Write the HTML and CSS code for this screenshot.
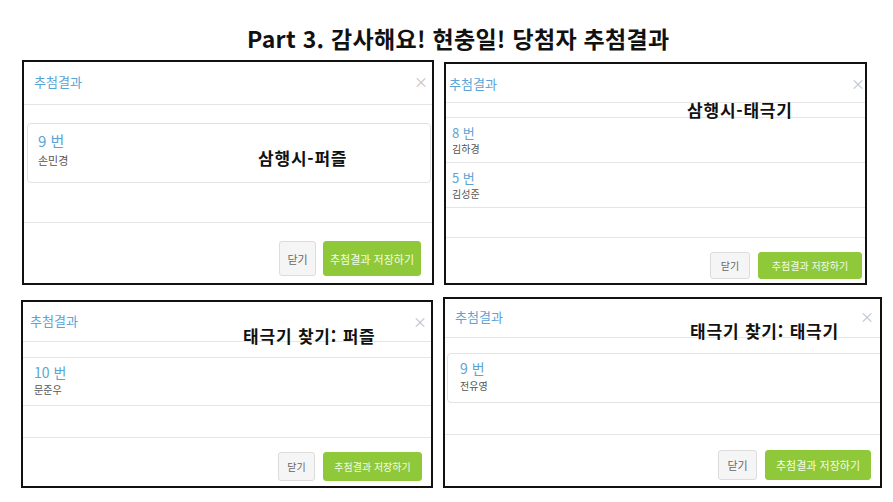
FILE: index.html
```html
<!DOCTYPE html>
<html lang="ko">
<head>
<meta charset="utf-8">
<title>Part 3. 당첨자 추첨결과</title>
<link rel="stylesheet" href="styles.css">
</head>
<body>
<h1 class="title">Part 3. 감사해요! 현충일! 당첨자 추첨결과</h1>
<div class="row row-top">
  <section class="modal m1">
    <div class="hd"><span class="hd-title">추첨결과</span><span class="close">×</span></div>
    <div class="bd">
      <div class="box">
        <div class="num">9 번</div>
        <div class="name">손민경</div>
      </div>
    </div>
    <div class="ft"><button class="btn btn-close">닫기</button><button class="btn btn-save">추첨결과 저장하기</button></div>
    <div class="label">삼행시-퍼즐</div>
  </section>
  <section class="modal m2">
    <div class="hd"><span class="hd-title">추첨결과</span><span class="close">×</span></div>
    <div class="bd">
      <div class="list">
        <div class="item"><div class="num">8 번</div><div class="name">김하경</div></div>
        <div class="item"><div class="num">5 번</div><div class="name">김성준</div></div>
      </div>
    </div>
    <div class="ft"><button class="btn btn-close">닫기</button><button class="btn btn-save">추첨결과 저장하기</button></div>
    <div class="label">삼행시-태극기</div>
  </section>
</div>
<div class="row row-bottom">
  <section class="modal m3">
    <div class="hd"><span class="hd-title">추첨결과</span><span class="close">×</span></div>
    <div class="bd">
      <div class="list">
        <div class="item"><div class="num">10 번</div><div class="name">문준우</div></div>
      </div>
    </div>
    <div class="ft"><button class="btn btn-close">닫기</button><button class="btn btn-save">추첨결과 저장하기</button></div>
    <div class="label">태극기 찾기: 퍼즐</div>
  </section>
  <section class="modal m4">
    <div class="hd"><span class="hd-title">추첨결과</span><span class="close">×</span></div>
    <div class="bd">
      <div class="box">
        <div class="num">9 번</div>
        <div class="name">전유영</div>
      </div>
    </div>
    <div class="ft"><button class="btn btn-close">닫기</button><button class="btn btn-save">추첨결과 저장하기</button></div>
    <div class="label">태극기 찾기: 태극기</div>
  </section>
</div>
</body>
</html>
```
FILE: styles.css
```css
* { box-sizing: border-box; }
html, body { margin: 0; padding: 0; background: #fff; }
body {
  width: 893px;
  height: 502px;
  overflow: hidden;
  font-family: "Noto Sans CJK KR", "Noto Sans", sans-serif;
  color: #333;
}
.title {
  margin: 0;
  padding: 24px 0 0 247px;
  height: 60px;
  font-size: 23px;
  line-height: 28px;
  letter-spacing: 0.3px;
  font-weight: 700;
  color: #111;
  white-space: nowrap;
}
.row { display: flex; align-items: flex-start; }
.row-bottom { margin-top: 15px; }

.modal {
  position: relative;
  display: flex;
  flex-direction: column;
  border: 2px solid #111;
  background: #fff;
  overflow: hidden;
}
.hd {
  display: flex;
  align-items: center;
  justify-content: space-between;
  border-bottom: 1px solid #e6e6e6;
  flex: none;
}
.hd-title { color: #5ba4d6; font-size: 13px; }
.close { color: #c4c4c4; font-size: 14px; line-height: 1; }
.bd { flex: none; }
.ft {
  flex: 1;
  display: flex;
  justify-content: flex-end;
  align-items: flex-start;
  gap: 7px;
  border-top: 1px solid #e6e6e6;
}
.num { color: #5ba4d6; line-height: 1.2; }
.name { color: #555; line-height: 1.3; }
.box {
  border: 1px solid #e2e2e2;
  border-radius: 4px;
}
.list { border-top: 1px solid #e6e6e6; }
.item { border-bottom: 1px solid #e6e6e6; }
.btn {
  font-family: inherit;
  border-radius: 3px;
  padding: 0;
  cursor: pointer;
}
.btn-close {
  background: #f5f5f5;
  border: 1px solid #dcdcdc;
  color: #666;
}
.btn-save {
  background: #8fc93a;
  border: 1px solid #8fc93a;
  color: #f4fbe8;
}
.label {
  position: absolute;
  font-weight: 700;
  color: #111;
  white-space: nowrap;
  line-height: 1;
  font-size: 17px;
  letter-spacing: 0.8px;
}

/* panel 1 */
.m1 { margin-left: 22px; width: 412px; height: 225px; }
.m1 .hd { height: 43px; padding: 0 4px 4px 10px; }
.m1 .bd { height: 117px; padding: 18px 1px 0 3px; }
.m1 .box { height: 60px; padding: 8px 10px 0; }
.m1 .num { font-size: 15px; }
.m1 .name { font-size: 11px; margin-top: 3px; }
.m1 .ft { padding: 18px 11px 0 0; }
.m1 .btn { height: 35px; font-size: 11px; }
.m1 .btn-close { width: 37px; }
.m1 .btn-save { width: 98px; }
.m1 .label { left: 234px; top: 87px; }

/* panel 2 */
.m2 { margin-left: 10px; margin-top: 2px; width: 423px; height: 223px; }
.m2 .hd { height: 39px; padding: 0 0 0 3px; }
.m2 .bd { height: 134px; padding-top: 14px; }
.m2 .item { height: 45px; padding: 7px 6px 0; }
.m2 .num { font-size: 13px; }
.m2 .name { font-size: 10px; margin-top: 1px; }
.m2 .ft { padding: 14px 3px 0 0; gap: 8px; }
.m2 .btn { height: 27px; font-size: 10px; }
.m2 .btn-close { width: 40px; }
.m2 .btn-save { width: 104px; }
.m2 .label { left: 241px; top: 37px; }

/* panel 3 */
.m3 { margin-left: 21px; width: 412px; height: 188px; }
.m3 .hd { height: 40px; padding: 0 4px 2px 7px; }
.m3 .bd { height: 95px; padding-top: 15px; }
.m3 .item { height: 48px; padding: 6px 11px 0; }
.m3 .num { font-size: 14px; }
.m3 .name { font-size: 10px; margin-top: 2px; }
.m3 .ft { padding: 14px 9px 0 0; gap: 8px; }
.m3 .btn { height: 29px; font-size: 10px; }
.m3 .btn-close { width: 37px; }
.m3 .btn-save { width: 99px; }
.m3 .label { left: 220px; top: 25px; }

/* panel 4 */
.m4 { margin-left: 10px; margin-top: -3px; width: 439px; height: 191px; }
.m4 .hd { height: 39px; padding: 0 6px 4px 10px; }
.m4 .bd { height: 96px; padding: 15px 0 0 2px; margin-right: -8px; }
.m4 .box { height: 50px; padding: 6px 12px 0; }
.m4 .num { font-size: 14px; }
.m4 .name { font-size: 10px; margin-top: 2px; }
.m4 .ft { padding: 15px 9px 0 0; gap: 8px; }
.m4 .btn { height: 30px; font-size: 11px; }
.m4 .btn-close { width: 39px; }
.m4 .btn-save { width: 106px; }
.m4 .label { left: 245px; top: 23px; }
```
